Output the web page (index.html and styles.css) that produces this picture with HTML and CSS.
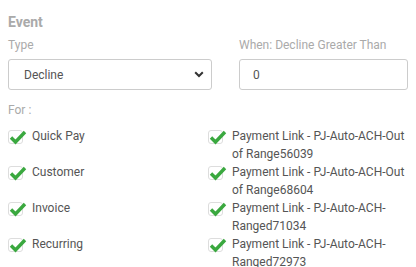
FILE: index.html
```html
<!DOCTYPE html>
<html lang="en">
<head>
    <meta charset="UTF-8">
    <title>Event</title>
    <link rel="stylesheet" href="styles.css">
</head>
<body>
    <h3 class="section-title">Event</h3>

    <div class="fields">
        <div class="field">
            <label class="field-label">Type</label>
            <div class="select-box">
                <span>Decline</span>
                <svg class="caret" width="10" height="7" viewBox="0 0 10 7"><path d="M1.2 1.3 L5 5 L8.8 1.3" fill="none" stroke="#333" stroke-width="2"/></svg>
            </div>
        </div>
        <div class="field">
            <label class="field-label">When: Decline Greater Than</label>
            <div class="input-box">0</div>
        </div>
    </div>

    <div class="field-label for-label">For :</div>

    <div class="checks">
        <div class="check"><span class="box"><svg viewBox="0 0 18 16" width="18" height="16"><path d="M2 8.5 L6.5 13 L16 3" fill="none" stroke="#3aa83f" stroke-width="3.4"/></svg></span><span class="text">Quick Pay</span></div>
        <div class="check"><span class="box"><svg viewBox="0 0 18 16" width="18" height="16"><path d="M2 8.5 L6.5 13 L16 3" fill="none" stroke="#3aa83f" stroke-width="3.4"/></svg></span><span class="text">Payment Link - PJ-Auto-ACH-Out of Range56039</span></div>
        <div class="check"><span class="box"><svg viewBox="0 0 18 16" width="18" height="16"><path d="M2 8.5 L6.5 13 L16 3" fill="none" stroke="#3aa83f" stroke-width="3.4"/></svg></span><span class="text">Customer</span></div>
        <div class="check"><span class="box"><svg viewBox="0 0 18 16" width="18" height="16"><path d="M2 8.5 L6.5 13 L16 3" fill="none" stroke="#3aa83f" stroke-width="3.4"/></svg></span><span class="text">Payment Link - PJ-Auto-ACH-Out of Range68604</span></div>
        <div class="check"><span class="box"><svg viewBox="0 0 18 16" width="18" height="16"><path d="M2 8.5 L6.5 13 L16 3" fill="none" stroke="#3aa83f" stroke-width="3.4"/></svg></span><span class="text">Invoice</span></div>
        <div class="check"><span class="box"><svg viewBox="0 0 18 16" width="18" height="16"><path d="M2 8.5 L6.5 13 L16 3" fill="none" stroke="#3aa83f" stroke-width="3.4"/></svg></span><span class="text">Payment Link - PJ-Auto-ACH-Ranged71034</span></div>
        <div class="check"><span class="box"><svg viewBox="0 0 18 16" width="18" height="16"><path d="M2 8.5 L6.5 13 L16 3" fill="none" stroke="#3aa83f" stroke-width="3.4"/></svg></span><span class="text">Recurring</span></div>
        <div class="check"><span class="box"><svg viewBox="0 0 18 16" width="18" height="16"><path d="M2 8.5 L6.5 13 L16 3" fill="none" stroke="#3aa83f" stroke-width="3.4"/></svg></span><span class="text">Payment Link - PJ-Auto-ACH-Ranged72973</span></div>
    </div>
</body>
</html>
```

FILE: styles.css
```css
body {
    margin: 0;
    padding: 13px 8px 0 8px;
    font-family: Roboto, "Liberation Sans", sans-serif;
    background: #fff;
    color: #555;
}
.section-title {
    margin: 0 0 6px 0;
    font-size: 14px;
    font-weight: bold;
    color: #aaa;
    line-height: 18px;
}
.field-label {
    display: block;
    font-size: 12px;
    color: #aaa;
    line-height: 16px;
    margin-bottom: 6px;
}
.fields {
    display: grid;
    grid-template-columns: 204px 169px;
    column-gap: 27px;
}
.select-box, .input-box {
    height: 31px;
    box-sizing: border-box;
    border: 1px solid #ccc;
    border-radius: 3px;
    font-size: 12px;
    color: #555;
    display: flex;
    align-items: center;
    padding: 0 12px;
}
.select-box {
    justify-content: space-between;
    padding: 0 7px 0 15px;
}
.input-box {
    padding-left: 13px;
}
.for-label {
    margin-top: 12px;
    margin-bottom: 9px;
}
.checks {
    display: grid;
    grid-template-columns: 200px 200px;
}
.check {
    display: flex;
    align-items: flex-start;
    height: 36px;
    font-size: 12px;
    line-height: 18px;
    color: #555;
}
.box {
    position: relative;
    flex: none;
    width: 15px;
    height: 14px;
    margin: 3px 9px 0 0;
    box-sizing: border-box;
    border: 1px solid #ddd;
    border-radius: 3px;
}
.box svg {
    position: absolute;
    left: 0;
    top: -2px;
}
.text {
    flex: 1;
}
```
